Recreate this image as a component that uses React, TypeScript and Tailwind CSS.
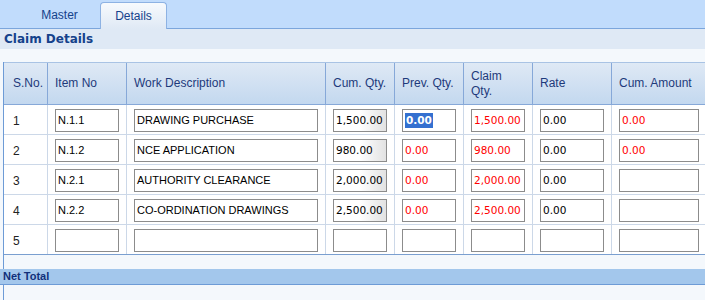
import React from 'react'

const ROWS = [
  { n: '1', item: 'N.1.1', desc: 'DRAWING PURCHASE', cum: '1,500.00', prev: '0.00', claim: '1,500.00', rate: '0.00', amt: '0.00' },
  { n: '2', item: 'N.1.2', desc: 'NCE APPLICATION', cum: '980.00', prev: '0.00', claim: '980.00', rate: '0.00', amt: '0.00' },
  { n: '3', item: 'N.2.1', desc: 'AUTHORITY CLEARANCE', cum: '2,000.00', prev: '0.00', claim: '2,000.00', rate: '0.00', amt: '' },
  { n: '4', item: 'N.2.2', desc: 'CO-ORDINATION DRAWINGS', cum: '2,500.00', prev: '0.00', claim: '2,500.00', rate: '0.00', amt: '' },
  { n: '5', item: '', desc: '', cum: '', prev: '', claim: '', rate: '', amt: '' },
]

const GRID = 'grid grid-cols-[44px_79px_199px_69px_69px_69px_79px_95px]'
const SANS = "font-['Liberation_Sans',Arial,sans-serif]"
const NUM = "font-['DejaVu_Sans',Verdana,sans-serif] text-[10.5px]"

function Box({ children, className = '' }: { children?: React.ReactNode; className?: string }) {
  return (
    <div className={`flex h-[23px] w-full items-center overflow-hidden whitespace-nowrap border border-[#8c8c8c] bg-white px-[2px] ${className}`}>
      {children}
    </div>
  )
}

function Cell({ children, last }: { children?: React.ReactNode; last?: boolean }) {
  return (
    <div className={`flex items-center border-r px-[7px] pt-[2px] ${last ? 'border-[#ccd8e8]' : 'border-[#ccd8e8]'}`}>
      {children}
    </div>
  )
}

export default function App() {
  return (
    <div className={`h-[300px] w-[705px] overflow-hidden bg-[#f4f8fc] ${SANS}`}>
      {/* tabs */}
      <div className="flex h-[29px] items-end border-b border-[#7ca6dc] bg-[#c1dcfc] pl-[26px]">
        <div className="flex h-[26px] w-[67px] items-center justify-center text-[12px] text-[#15428b]">Master</div>
        <div className="-mb-px ml-[7px] flex h-[27px] w-[67px] items-center justify-center rounded-t-[4px] border border-b-0 border-[#8db2e3] bg-gradient-to-b from-[#f7fafd] to-[#dfe9f5] text-[12px] text-[#15428b]">
          Details
        </div>
      </div>

      <div className="flex h-[20px] items-center bg-[#dfe9f5] pl-[4px] font-['DejaVu_Sans',Verdana,sans-serif] text-[12px] font-bold text-[#15428b]">
        Claim Details
      </div>
      <div className="h-[13px] bg-[#f4f8fc]" />

      <div className="ml-[3px] border-l border-[#6d9bd6]">
        {/* header */}
        <div className={`${GRID} h-[43px] border-y border-t-[#a9c3e4] border-b-[#86a8d8] bg-gradient-to-b from-[#dfe9f5] to-[#c3d8ef] text-[12px] leading-[15px] text-[#1e3a7b]`}>
          <div className="flex items-center border-r border-[#86a8d8] pl-[9px]">S.No.</div>
          <div className="flex items-center border-r border-[#86a8d8] px-[7px]">Item No</div>
          <div className="flex items-center border-r border-[#86a8d8] px-[7px]">Work Description</div>
          <div className="flex items-center whitespace-nowrap border-r border-[#86a8d8] px-[7px]">Cum. Qty.</div>
          <div className="flex items-center whitespace-nowrap border-r border-[#86a8d8] px-[7px]">Prev. Qty.</div>
          <div className="flex items-center border-r border-[#86a8d8] px-[7px]">
            Claim
            <br />
            Qty.
          </div>
          <div className="flex items-center border-r border-[#86a8d8] px-[7px]">Rate</div>
          <div className="flex items-center whitespace-nowrap px-[7px]">Cum. Amount</div>
        </div>

        {/* rows */}
        {ROWS.map((r, i) => (
          <div
            key={r.n}
            className={`${GRID} h-[30px] border-b bg-white ${i === ROWS.length - 1 ? 'border-[#7a9fd0]' : 'border-[#ccd8e8]'}`}
          >
            <div className="flex items-center border-r border-[#ccd8e8] pl-[9px] pt-[2px] text-[12px] text-[#222]">{r.n}</div>
            <Cell>
              <Box className="text-[11px] text-black">{r.item}</Box>
            </Cell>
            <Cell>
              <Box className="text-[11px] text-black">{r.desc}</Box>
            </Cell>
            <Cell>
              <Box className={`${NUM} text-black ${r.cum ? 'bg-[linear-gradient(to_right,#ffffff_50%,#e2e2e2_100%)]' : ''}`}>{r.cum}</Box>
            </Cell>
            <Cell>
              <Box className={`${NUM} text-[#ff0000]`}>
                {i === 0 ? <span className="bg-[#3470d0] px-px font-bold text-white">{r.prev}</span> : r.prev}
              </Box>
            </Cell>
            <Cell>
              <Box className={`${NUM} text-[#ff0000]`}>{r.claim}</Box>
            </Cell>
            <Cell>
              <Box className={`${NUM} text-black`}>{r.rate}</Box>
            </Cell>
            <Cell last>
              <Box className={`${NUM} text-[#ff0000]`}>{r.amt}</Box>
            </Cell>
          </div>
        ))}
        <div className="h-[14px]" />
      </div>

      <div className="flex h-[16px] items-center border-b border-[#6d9bd6] bg-[#a3c7ec] pl-[3px] text-[11px] font-bold text-[#12307a]">
        Net Total
      </div>
      <div className="ml-[3px] h-[20px] border-l border-[#6d9bd6]" />
    </div>
  )
}
